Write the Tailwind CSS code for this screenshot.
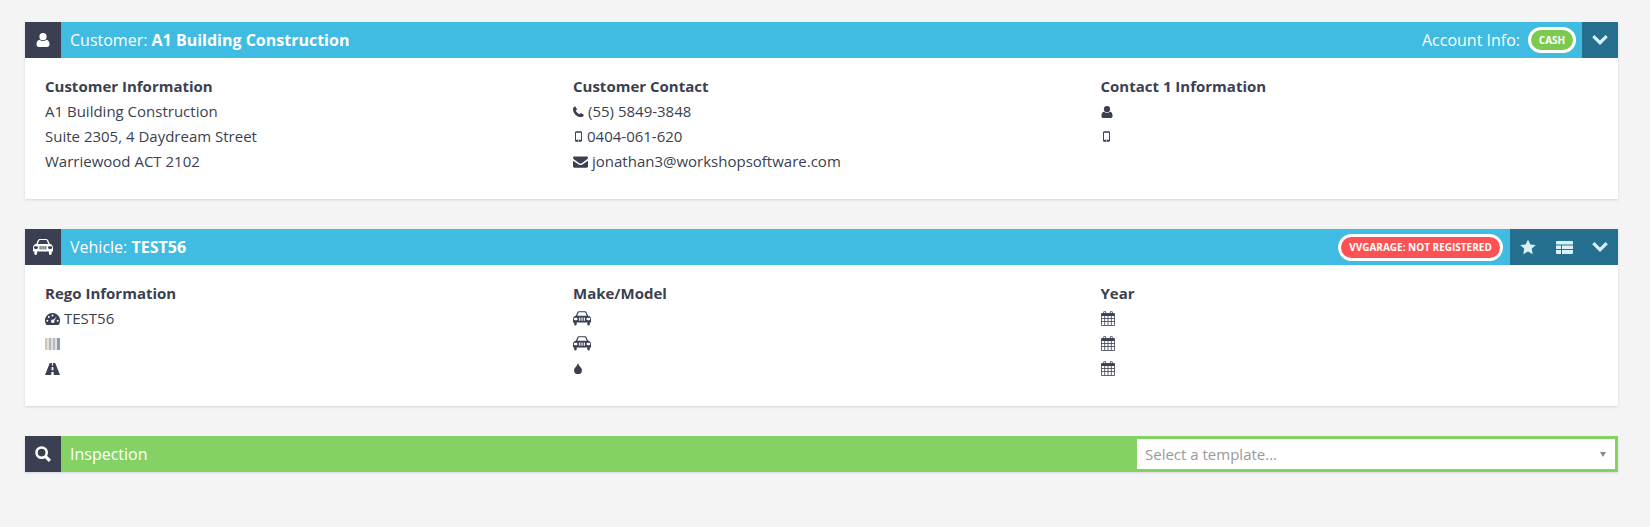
<!DOCTYPE html>
<html lang="en">

<head>
    <meta charset="UTF-8">
    <title>Job</title>
    <script src="https://cdn.jsdelivr.net/npm/@tailwindcss/browser@4"></script>
</head>

<body class="bg-[#f4f4f4] font-['Open_Sans',sans-serif] text-[15px] text-[#3a3f51] h-[527px] overflow-hidden">
    <svg class="hidden">
        <symbol id="car" viewBox="0 0 20 16"><path fill-rule="evenodd" d="M3.200 5 4.700 1.500C5.100.6 5.900 0 6.900 0h6.200c1 0 1.800.6 2.200 1.500L16.800 5h.5C18.900 5.500 20 7 20 8.700V12.500h-1.300V14.500a1.400 1.400 0 0 1-2.800 0V12.500H4.100V14.500a1.400 1.400 0 0 1-2.800 0V12.500H0V8.700C0 7 1.100 5.500 2.700 5zM4.700 5h10.600l-1.300-3.100c-.2-.6-.5-.9-1.100-.9H7.100c-.6 0-.9.300-1.100.9zM2.200 7.300a1.300 1.300 0 1 0 0 2.600h1.500a1.300 1.300 0 0 0 0-2.600zm14.100 0a1.300 1.300 0 0 0 0 2.600h1.500a1.300 1.300 0 1 0 0-2.600zM6.600 7v3.400h1V7zm1.900 0v3.400h1V7zm1.900 0v3.400h1V7zm1.900 0v3.400h1V7z"/></symbol>
        <symbol id="cal" viewBox="0 0 14 15">
            <path d="M.5 2.500h13V5H.5z" />
            <path d="M2.700 3V1.200a1 1 0 0 1 2 0V3M9.300 3V1.200a1 1 0 0 1 2 0V3" fill="none" stroke="currentColor" stroke-width=".9" />
            <path d="M.5 2.500h13v12H.5zM.5 7.500h13M.5 10.500h13M3.700 5v9.500M7 5v9.500M10.300 5v9.500" fill="none" stroke="currentColor" stroke-width=".8" />
        </symbol>
        <symbol id="mobile" viewBox="0 0 8 12"><path fill-rule="evenodd" d="M1.500 0h5C7.300 0 8 .7 8 1.500v9c0 .8-.7 1.500-1.500 1.500h-5C.7 12 0 11.300 0 10.500v-9C0 .7.700 0 1.500 0zM1.100 1.800v7.900h5.800V1.800zM4 10.100a.6.6 0 1 0 0 1.200.6.6 0 0 0 0-1.200z"/></symbol>
        <symbol id="user" viewBox="0 0 14 14"><path d="M7 0a3.600 3.600 0 0 1 3.600 3.700A3.600 3.600 0 0 1 7 7.300a3.600 3.600 0 0 1-3.600-3.600A3.600 3.600 0 0 1 7 0zM3.600 6.700C4.500 7.600 5.700 8.100 7 8.100s2.500-.5 3.400-1.400c2 .2 3.100 1.900 3.100 4.900 0 1.500-1 2.400-2.400 2.400H2.900C1.500 14 .5 13.100.5 11.600c0-3 1.100-4.700 3.100-4.900z"/></symbol>
        <symbol id="chev" viewBox="0 0 16 10"><path d="M8 10 .2 2.200 2.400 0 8 5.600 13.600 0l2.200 2.200z"/></symbol>
    </svg>

    <div class="pt-[22px] px-[25px] w-[1643px]">
        <!-- customer -->
        <section class="bg-white shadow-[0_1px_2px_#d5d5de] h-[177px]">
            <div class="flex items-center h-9 bg-[#40bbe2] text-white text-[16px]">
                <div class="flex items-center justify-center w-9 h-9 bg-[#3a3f51]">
                    <svg class="w-[14px] h-[14px] fill-white"><use href="#user" /></svg>
                </div>
                <div class="pl-[9px]">Customer: <b class="font-bold">A1 Building Construction</b></div>
                <div class="ml-auto flex items-center h-9">
                    <span>Account Info:</span>
                    <span class="ml-2 flex items-center justify-center w-[48px] h-[26px] rounded-full border-[3px] border-white bg-[#7cc94f] text-[10px] font-bold">CASH</span>
                    <div class="ml-[6px] flex items-center justify-center w-9 h-9 bg-[#26708f]">
                        <svg class="w-4 h-[10px] fill-[#d9f1fa]"><use href="#chev" /></svg>
                    </div>
                </div>
            </div>
            <div class="grid grid-cols-[528px_527.500px_528px] pl-5 pt-[16px]">
                <div>
                    <h3 class="font-bold leading-[25px]">Customer Information</h3>
                    <p class="leading-[25px]">A1 Building Construction</p>
                    <p class="leading-[25px]">Suite 2305, 4 Daydream Street</p>
                    <p class="leading-[25px]">Warriewood ACT 2102</p>
                </div>
                <div>
                    <h3 class="font-bold leading-[25px]">Customer Contact</h3>
                    <p class="flex items-center leading-[25px]">
                        <svg class="w-[11px] h-[11px] mr-[4px] fill-[#3a3f51]" viewBox="0 0 14 14"><path d="M3 .5 5.200 4 3.500 5.700C4.500 7.700 6.300 9.500 8.300 10.500L10 8.800 13.800 11C13.800 12.600 12 14 10 14 5 14 0 9 0 4 0 2 1.400.5 3 .5z"/></svg>
                        (55) 5849-3848
                    </p>
                    <p class="flex items-center leading-[25px]">
                        <svg class="w-[7px] h-[11px] ml-[2px] mr-[5px] fill-[#3a3f51]"><use href="#mobile" /></svg>
                        0404-061-620
                    </p>
                    <p class="flex items-center leading-[25px]">
                        <svg class="w-[15px] h-[12px] mr-[4px] fill-[#3a3f51]" viewBox="0 0 16 12"><path d="M1.500 0h13C15.300 0 16 .7 16 1.500c0 .6-.4 1.200-.9 1.600L9.300 7.200c-.8.500-1.800.5-2.600 0L.9 3.100C.4 2.700 0 2.100 0 1.500 0 .7.700 0 1.500 0zM0 4.700l6 4c1.200.8 2.800.8 4 0l6-4v5.800c0 .8-.7 1.500-1.500 1.500h-13C.7 12 0 11.300 0 10.500z"/></svg>
                        jonathan3@workshopsoftware.com
                    </p>
                </div>
                <div>
                    <h3 class="font-bold leading-[25px]">Contact 1 Information</h3>
                    <p class="flex items-center h-[25px]"><svg class="w-3 h-3 fill-[#3a3f51]"><use href="#user" /></svg></p>
                    <p class="flex items-center h-[25px]"><svg class="w-[7px] h-[11px] ml-[2px] fill-[#3a3f51]"><use href="#mobile" /></svg></p>
                </div>
            </div>
        </section>

        <!-- vehicle -->
        <section class="mt-[30px] bg-white shadow-[0_1px_2px_#d5d5de] h-[177px]">
            <div class="flex items-center h-9 bg-[#40bbe2] text-white text-[16px]">
                <div class="flex items-center justify-center w-9 h-9 bg-[#3a3f51]">
                    <svg class="w-5 h-4 fill-white"><use href="#car" /></svg>
                </div>
                <div class="pl-[9px]">Vehicle: <b class="font-bold">TEST56</b></div>
                <div class="ml-auto flex items-center h-9">
                    <span class="flex items-center justify-center w-[165px] h-[27px] rounded-full border-[3px] border-white bg-[#fc5254] text-[10px] font-bold">VVGARAGE: NOT REGISTERED</span>
                    <div class="ml-[7px] flex items-center h-9 w-[108px] bg-[#26708f] pl-[10px] gap-[19px]">
                        <svg class="w-4 h-4 mr-px fill-[#d9f1fa]" viewBox="0 0 16 16"><path d="m8 .5 2.300 4.900 5.400.7-4 3.700 1.100 5.400L8 12.600l-4.800 2.600 1.100-5.400-4-3.700 5.400-.7z"/></svg>
                        <svg class="w-[17px] h-[13px] fill-[#d9f1fa]" viewBox="0 0 17 13"><path d="M1 0h15a1 1 0 0 1 1 1v2.500H0V1a1 1 0 0 1 1-1zM0 4.500h5v3.500H0zM6 4.500h11v3.500H6zM0 9h5v4H1a1 1 0 0 1-1-1zM6 9h11v3a1 1 0 0 1-1 1H6z"/></svg>
                        <svg class="w-4 h-[10px] fill-[#d9f1fa]"><use href="#chev" /></svg>
                    </div>
                </div>
            </div>
            <div class="grid grid-cols-[528px_527.500px_528px] pl-5 pt-[16px]">
                <div>
                    <h3 class="font-bold leading-[25px]">Rego Information</h3>
                    <p class="flex items-center leading-[25px]">
                        <svg class="w-[15px] h-3 mr-[4px] fill-[#3a3f51]" viewBox="0 0 15 12"><path fill-rule="evenodd" d="M7.500 0a7.500 7.500 0 0 1 6.400 11.400l-.4.600h-12l-.4-.6A7.500 7.500 0 0 1 7.500 0zm0 1.500a1 1 0 1 0 0 2 1 1 0 0 0 0-2zM3.800 3a1 1 0 1 0 0 2 1 1 0 0 0 0-2zm7.900.6L8.300 6.800a1.700 1.700 0 1 0 1 1zM2.300 6.800a1 1 0 1 0 0 2 1 1 0 0 0 0-2zm10.400 0a1 1 0 1 0 0 2 1 1 0 0 0 0-2z"/></svg>
                        TEST56
                    </p>
                    <p class="flex items-center h-[25px]">
                        <span class="w-[15px] h-3 bg-[linear-gradient(90deg,#cfc6b4_0_2px,#dfe2e6_2px_4px,#bdb6ae_4px_6px,#e2dadc_6px_8px,#b4bccb_8px_10px,#e0e1e1_10px_12px,#8f9bb0_12px_15px)]"></span>
                    </p>
                    <p class="flex items-center h-[25px]">
                        <svg class="w-[15px] h-3 fill-[#3a3f51]" viewBox="0 0 15 12"><path d="M4.800 0h2.200l-.1 2.500h1.200L8 0h2.200L15 12H8.800l-.2-3H6.400l-.2 3H0zm1.900 4-.2 3.200h2L8.300 4z"/></svg>
                    </p>
                </div>
                <div>
                    <h3 class="font-bold leading-[25px]">Make/Model</h3>
                    <p class="flex items-center h-[25px]"><svg class="w-[18px] h-[15px] fill-[#3a3f51]"><use href="#car" /></svg></p>
                    <p class="flex items-center h-[25px]"><svg class="w-[18px] h-[15px] fill-[#3a3f51]"><use href="#car" /></svg></p>
                    <p class="flex items-center h-[25px]">
                        <svg class="w-2 h-[11px] ml-[1px] fill-[#3a3f51]" viewBox="0 0 8 11"><path d="M4 0c.6 2 1.500 3 2.500 4.300C7.400 5.300 8 6.200 8 7.200A4 4 0 0 1 0 7.200c0-1 .6-1.900 1.500-2.900C2.500 3 3.400 2 4 0z"/></svg>
                    </p>
                </div>
                <div>
                    <h3 class="font-bold leading-[25px]">Year</h3>
                    <p class="flex items-center h-[25px]"><svg class="w-[14px] h-[15px] fill-[#3a3f51] text-[#3a3f51]"><use href="#cal" /></svg></p>
                    <p class="flex items-center h-[25px]"><svg class="w-[14px] h-[15px] fill-[#3a3f51] text-[#3a3f51]"><use href="#cal" /></svg></p>
                    <p class="flex items-center h-[25px]"><svg class="w-[14px] h-[15px] fill-[#3a3f51] text-[#3a3f51]"><use href="#cal" /></svg></p>
                </div>
            </div>
        </section>

        <!-- inspection -->
        <section class="mt-[30px] flex items-center h-9 bg-[#84d164] text-white text-[16px] shadow-[0_1px_2px_#d5d5de]">
            <div class="flex items-center justify-center w-9 h-9 bg-[#3a3f51]">
                <svg class="w-4 h-4 fill-none stroke-white stroke-[2.400]" viewBox="0 0 15 15"><circle cx="6.200" cy="6.200" r="4.800" /><path d="m9.800 9.800 4.200 4.200" stroke-width="3" /></svg>
            </div>
            <div class="pl-[9px]">Inspection</div>
            <div class="ml-auto mr-[3px] flex items-center justify-between w-[478px] h-[30px] bg-white pl-2 pr-[9px] text-[15px] text-[#999]">
                <span>Select a template...</span>
                <span class="w-0 h-0 border-x-[3.500px] border-x-transparent border-t-[5px] border-t-[#888]"></span>
            </div>
        </section>
    </div>
</body>

</html>
